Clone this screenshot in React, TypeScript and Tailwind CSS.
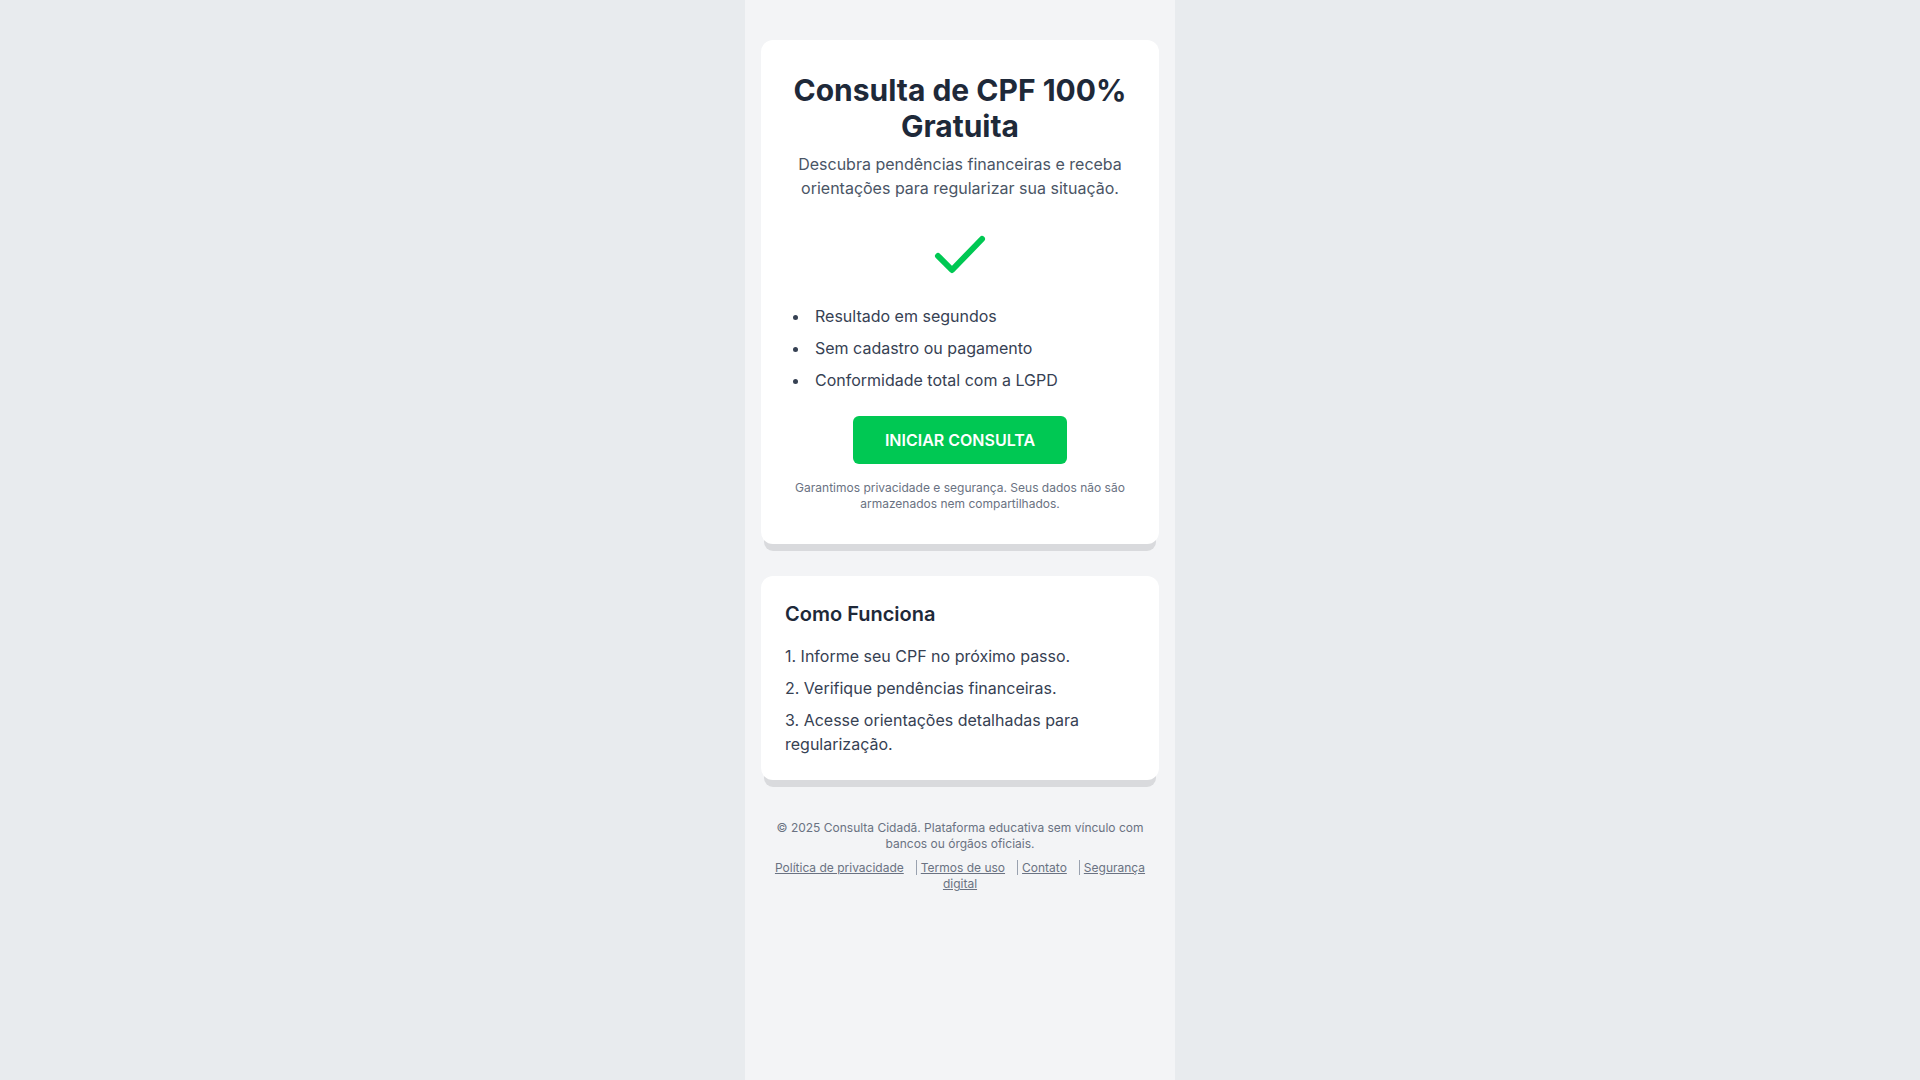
const beneficios = ['Resultado em segundos', 'Sem cadastro ou pagamento', 'Conformidade total com a LGPD'];

const passos = [
  '1. Informe seu CPF no próximo passo.',
  '2. Verifique pendências financeiras.',
  '3. Acesse orientações detalhadas para regularização.',
];

const links = ['Política de privacidade', 'Termos de uso', 'Contato', 'Segurança digital'];

function CheckIcon() {
  return (
    <svg width="64" height="64" viewBox="0 0 64 64" fill="none" aria-hidden="true">
      <polyline
        points="10,32 24,46 54,15"
        stroke="#00c853"
        strokeWidth="6"
        strokeLinecap="round"
        strokeLinejoin="round"
      />
    </svg>
  );
}

export default function App() {
  return (
    <div className="min-h-screen bg-[#e8ebee] [font-family:Inter,'Noto_Sans',sans-serif]">
      <div className="w-[430px] mx-auto min-h-screen bg-[#f3f4f6] px-4 pt-10 pb-10">
        <div className="bg-white rounded-xl p-8 text-center shadow-[0_10px_0_-3px_#d9dadd]">
          <h1 className="text-3xl font-bold text-gray-800">Consulta de CPF 100% Gratuita</h1>
          <p className="mt-2 text-base text-gray-600">
            Descubra pendências financeiras e receba orientações para regularizar sua situação.
          </p>

          <div className="mt-6 flex justify-center">
            <CheckIcon />
          </div>

          <ul className="mt-4 space-y-2 text-left list-disc list-inside text-gray-700">
            {beneficios.map((item) => (
              <li key={item}>{item}</li>
            ))}
          </ul>

          <button className="mt-6 bg-[#00c853] text-white font-semibold px-8 py-3 rounded-md">
            INICIAR CONSULTA
          </button>

          <p className="mt-4 text-xs text-gray-500">
            Garantimos privacidade e segurança. Seus dados não são armazenados nem compartilhados.
          </p>
        </div>

        <div className="mt-8 bg-white rounded-xl p-6 shadow-[0_10px_0_-3px_#d9dadd]">
          <h2 className="text-xl font-semibold text-gray-800">Como Funciona</h2>
          <div className="mt-4 space-y-2 text-gray-700">
            {passos.map((passo) => (
              <p key={passo}>{passo}</p>
            ))}
          </div>
        </div>

        <footer className="mt-10 text-center text-xs text-gray-500">
          <p>© 2025 Consulta Cidadã. Plataforma educativa sem vínculo com bancos ou órgãos oficiais.</p>
          <p className="mt-2">
            {links.map((link, i) => (
              <a
                key={link}
                href="#"
                className={i === 0 ? 'underline' : 'underline ml-3 pl-1 border-l border-gray-400'}
              >
                {link}
              </a>
            ))}
          </p>
        </footer>
      </div>
    </div>
  );
}
